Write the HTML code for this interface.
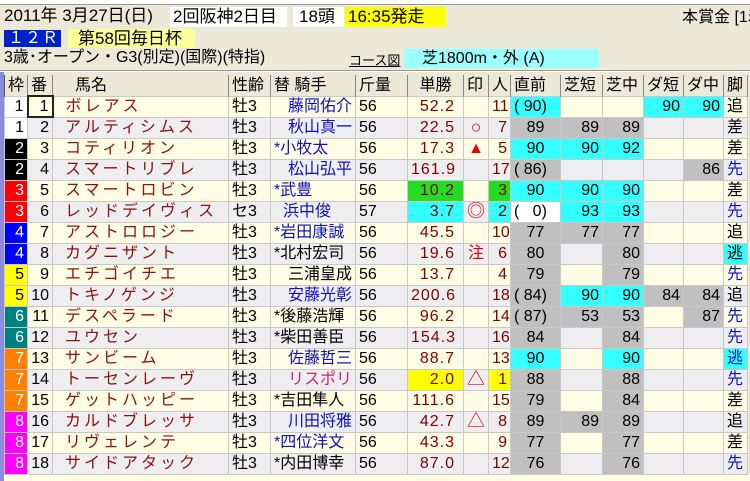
<!DOCTYPE html>
<html><head><meta charset="utf-8"><style>
*{margin:0;padding:0;box-sizing:border-box}
body{width:750px;height:481px;background:#ECE9D8;font-family:"Liberation Sans","Noto Sans CJK JP",sans-serif;font-size:16px;position:relative;overflow:hidden;color:#000}
.a{position:absolute;white-space:nowrap;line-height:20px}
table{position:absolute;left:4px;top:75px;border-collapse:collapse;table-layout:fixed;width:743px}
td{height:21px;border:1px solid #c8c8c8;padding:0 3px;white-space:nowrap;overflow:hidden;line-height:19px;font-size:16px}
tr.h td{background:#ECE9D8;border:1px solid #888;border-top:none;border-bottom:none;border-left:1px solid #555}
tr.o td{background:#FFFDE4}
tr.e td{background:#EEEEF0}
.r{text-align:right}.c{text-align:center}
.nm{color:#8B1010;letter-spacing:3px;padding-left:12px}
.od{color:#800000;text-align:right;padding-right:8px;letter-spacing:1px}
.bl{color:#1010C0}
.g{background:#C0C0C0!important}.cy{background:#33FFFF!important}
.w{color:#fff}
.mk{font-size:18px}
</style></head><body>
<div style="position:absolute;left:0;top:0;width:750px;height:5px;background:#fff;border-bottom:1px solid #999"></div>
<div class="a" style="left:4px;top:6px;font-size:17px">2011年 3月27日(日)</div>
<div class="a" style="left:170px;top:7px;width:117px;height:20px;background:#fff;font-size:17px;padding-left:3px">2回阪神2日目</div>
<div class="a" style="left:293px;top:7px;width:51px;height:20px;background:#fff;font-size:17px;padding-left:6px">18頭</div>
<div class="a" style="left:345px;top:7px;width:101px;height:20px;background:#FFFF00;font-size:17px;padding-left:3px">16:35発走</div>
<div class="a" style="left:682px;top:8px">本賞金 [1着</div>
<div class="a" style="left:4px;top:30px;width:57px;height:17px;background:#0022CC;color:#fff;line-height:17px;font-size:16px;padding-left:4px;letter-spacing:1px">１２Ｒ</div>
<div class="a" style="left:68px;top:29px;width:127px;height:19px;background:#FFFF99;font-size:17px;line-height:19px;padding-left:10px">第58回毎日杯</div>
<div class="a" style="left:4px;top:48px;font-size:16px">3歳･オープン・G3(別定)(国際)(特指)</div>
<div class="a" style="left:349px;top:51px;font-size:13px;text-decoration:underline">コース図</div>
<div class="a" style="left:404px;top:49px;width:195px;height:19px;background:#99FFFF;line-height:19px;padding-left:18px">芝1800m・外 (A)</div>
<div style="position:absolute;left:0;top:70px;width:750px;height:2px;border-top:1px solid #999;border-bottom:1px solid #fff"></div>
<div style="position:absolute;left:0;top:72px;width:4px;height:409px;background:#8C8CDC"></div>
<div style="position:absolute;left:4px;top:474px;width:746px;height:7px;background:#FFFDE4"></div>
<table>
<colgroup><col style="width:23px"><col style="width:25px"><col style="width:176px"><col style="width:42px"><col style="width:85px"><col style="width:52px"><col style="width:56px"><col style="width:25px"><col style="width:22px"><col style="width:50px"><col style="width:42px"><col style="width:41px"><col style="width:40px"><col style="width:40px"><col style="width:24px"></colgroup>
<tr class="h"><td>枠</td><td>番</td><td style="padding-left:22px">馬名</td><td>性齢</td><td>替 騎手</td><td>斤量</td><td class="c">単勝</td><td>印</td><td>人</td><td>直前</td><td>芝短</td><td>芝中</td><td>ダ短</td><td>ダ中</td><td>脚</td></tr>
<tr class="o"><td class="r" style="background:#fff">1</td><td class="r" style="border:2px solid #222">1</td><td class="nm">ボレアス</td><td>牡3</td><td class="r bl">藤岡佑介</td><td>56</td><td class="od">52.2</td><td></td><td class="r" style="color:#800000">11</td><td class="cy">( 90)</td><td></td><td></td><td class="r cy">90</td><td class="r cy">90</td><td>追</td></tr>
<tr class="e"><td class="r" style="background:#fff">1</td><td class="r">2</td><td class="nm">アルティシムス</td><td>牡3</td><td class="r bl">秋山真一</td><td>56</td><td class="od">22.5</td><td class="c mk" style="color:#d00">○</td><td class="r" style="color:#800000">7</td><td class="c g">89</td><td class="r g">89</td><td class="r g">89</td><td></td><td></td><td>差</td></tr>
<tr class="o"><td class="r w" style="background:#000">2</td><td class="r">3</td><td class="nm">コティリオン</td><td>牡3</td><td class="bl">*小牧太</td><td>56</td><td class="od">17.3</td><td class="c" style="color:#e00">▲</td><td class="r" style="color:#800000">5</td><td class="c cy">90</td><td class="r cy">90</td><td class="r cy">92</td><td></td><td></td><td>差</td></tr>
<tr class="e"><td class="r w" style="background:#000">2</td><td class="r">4</td><td class="nm">スマートリブレ</td><td>牡3</td><td class="r bl">松山弘平</td><td>56</td><td class="od">161.9</td><td></td><td class="r" style="color:#800000">17</td><td class="g">( 86)</td><td></td><td></td><td></td><td class="r g">86</td><td class="bl">先</td></tr>
<tr class="o"><td class="r w" style="background:#f00">3</td><td class="r">5</td><td class="nm">スマートロビン</td><td>牡3</td><td class="bl">*武豊</td><td>56</td><td class="od" style="background:#22DD22">10.2</td><td></td><td class="r" style="background:#22DD22;color:#800000">3</td><td class="c cy">90</td><td class="r cy">90</td><td class="r cy">90</td><td></td><td></td><td>差</td></tr>
<tr class="e"><td class="r w" style="background:#f00">3</td><td class="r">6</td><td class="nm">レッドデイヴィス</td><td>セ3</td><td class="bl" style="padding-left:12px">浜中俊</td><td>57</td><td class="od cy">3.7</td><td class="c mk" style="color:#d00">◎</td><td class="r cy" style="color:#800000">2</td><td style="background:#fff">(&nbsp;&nbsp; 0)</td><td class="r cy">93</td><td class="r cy">93</td><td></td><td></td><td class="bl">先</td></tr>
<tr class="o"><td class="r w" style="background:#00f">4</td><td class="r">7</td><td class="nm">アストロロジー</td><td>牡3</td><td class="bl">*岩田康誠</td><td>56</td><td class="od">45.5</td><td></td><td class="r" style="color:#800000">10</td><td class="c g">77</td><td class="r g">77</td><td class="r g">77</td><td></td><td></td><td>追</td></tr>
<tr class="e"><td class="r w" style="background:#00f">4</td><td class="r">8</td><td class="nm">カグニザント</td><td>牡3</td><td>*北村宏司</td><td>56</td><td class="od">19.6</td><td class="c" style="color:#d00">注</td><td class="r" style="color:#800000">6</td><td class="c g">80</td><td></td><td class="r g">80</td><td></td><td></td><td class="cy">逃</td></tr>
<tr class="o"><td class="r" style="background:#ff0">5</td><td class="r">9</td><td class="nm">エチゴイチエ</td><td>牡3</td><td class="r">三浦皇成</td><td>56</td><td class="od">13.7</td><td></td><td class="r" style="color:#800000">4</td><td class="c g">79</td><td></td><td class="r g">79</td><td></td><td></td><td class="bl">先</td></tr>
<tr class="e"><td class="r" style="background:#ff0">5</td><td class="r">10</td><td class="nm">トキノゲンジ</td><td>牡3</td><td class="r bl">安藤光彰</td><td>56</td><td class="od">200.6</td><td></td><td class="r" style="color:#800000">18</td><td class="g">( 84)</td><td class="r cy">90</td><td class="r cy">90</td><td class="r g">84</td><td class="r g">84</td><td>追</td></tr>
<tr class="o"><td class="r w" style="background:#008080">6</td><td class="r">11</td><td class="nm">デスペラード</td><td>牡3</td><td>*後藤浩輝</td><td>56</td><td class="od">96.2</td><td></td><td class="r" style="color:#800000">14</td><td class="g">( 87)</td><td class="r g">53</td><td class="r g">53</td><td></td><td class="r g">87</td><td class="bl">先</td></tr>
<tr class="e"><td class="r w" style="background:#008080">6</td><td class="r">12</td><td class="nm">ユウセン</td><td>牡3</td><td>*柴田善臣</td><td>56</td><td class="od">154.3</td><td></td><td class="r" style="color:#800000">16</td><td class="c g">84</td><td></td><td class="r g">84</td><td></td><td></td><td class="bl">先</td></tr>
<tr class="o"><td class="r w" style="background:#FF8000">7</td><td class="r">13</td><td class="nm">サンビーム</td><td>牡3</td><td class="r bl">佐藤哲三</td><td>56</td><td class="od">88.7</td><td></td><td class="r" style="color:#800000">13</td><td class="c cy">90</td><td></td><td class="r cy">90</td><td></td><td></td><td class="bl cy">逃</td></tr>
<tr class="e"><td class="r w" style="background:#FF8000">7</td><td class="r">14</td><td class="nm">トーセンレーヴ</td><td>牡3</td><td class="r" style="color:#D0207A">リスポリ</td><td>56</td><td class="od" style="background:#ff0">2.0</td><td class="c mk" style="color:#d00">△</td><td class="r" style="background:#ff0;color:#800000">1</td><td class="c g">88</td><td></td><td class="r g">88</td><td></td><td></td><td class="bl">先</td></tr>
<tr class="o"><td class="r w" style="background:#FF8000">7</td><td class="r">15</td><td class="nm">ゲットハッピー</td><td>牡3</td><td>*吉田隼人</td><td>56</td><td class="od">111.6</td><td></td><td class="r" style="color:#800000">15</td><td class="c g">79</td><td></td><td class="r g">84</td><td></td><td></td><td>差</td></tr>
<tr class="e"><td class="r w" style="background:#FF00FF">8</td><td class="r">16</td><td class="nm">カルドブレッサ</td><td>牡3</td><td class="r bl">川田将雅</td><td>56</td><td class="od">42.7</td><td class="c mk" style="color:#d00">△</td><td class="r" style="color:#800000">8</td><td class="c g">89</td><td class="r g">89</td><td class="r g">89</td><td></td><td></td><td>追</td></tr>
<tr class="o"><td class="r w" style="background:#FF00FF">8</td><td class="r">17</td><td class="nm">リヴェレンテ</td><td>牡3</td><td class="bl">*四位洋文</td><td>56</td><td class="od">43.3</td><td></td><td class="r" style="color:#800000">9</td><td class="c g">77</td><td></td><td class="r g">77</td><td></td><td></td><td>差</td></tr>
<tr class="e"><td class="r w" style="background:#FF00FF">8</td><td class="r">18</td><td class="nm">サイドアタック</td><td>牡3</td><td>*内田博幸</td><td>56</td><td class="od">87.0</td><td></td><td class="r" style="color:#800000">12</td><td class="c g">76</td><td></td><td class="r g">76</td><td></td><td></td><td class="bl">先</td></tr>
</table>
</body></html>
